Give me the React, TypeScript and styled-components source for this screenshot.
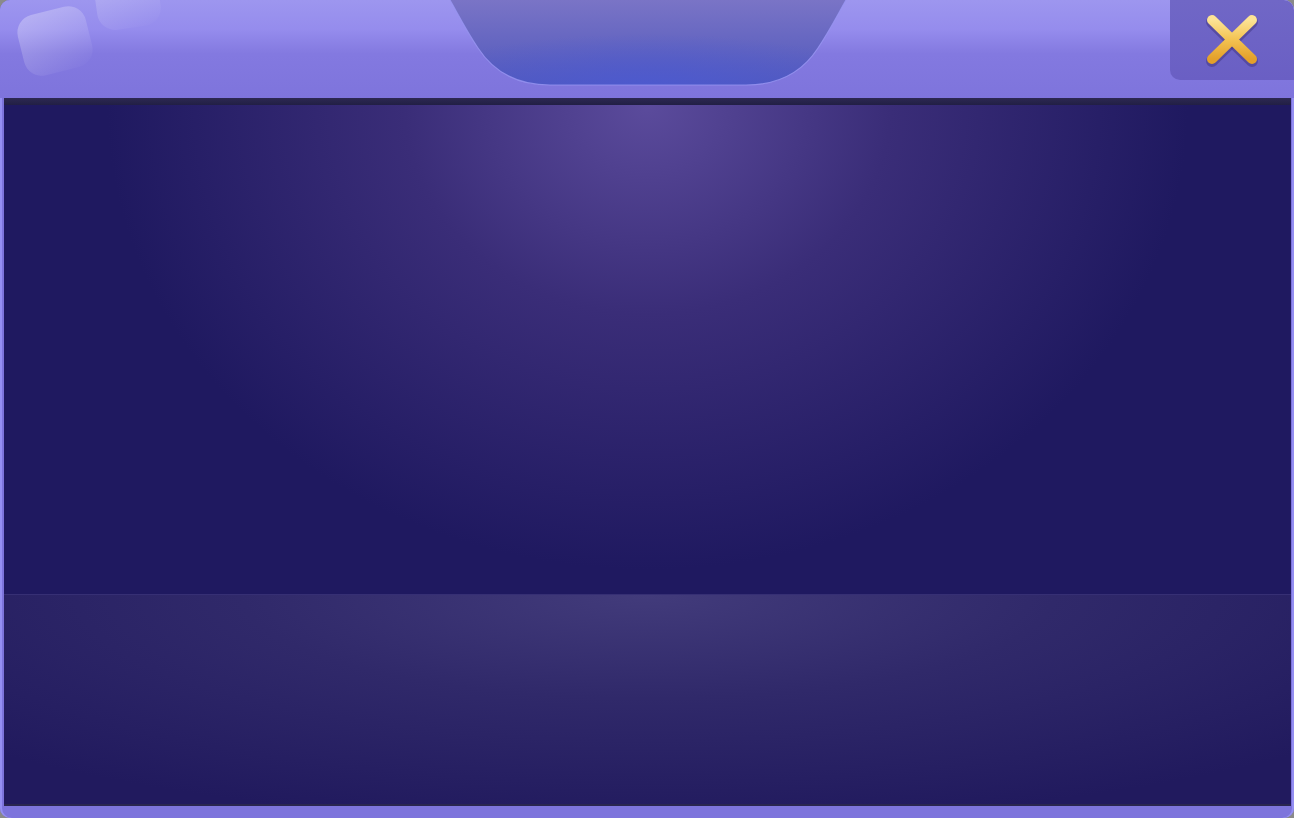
import React from "react";
import styled, { createGlobalStyle } from "styled-components";

const GlobalStyle = createGlobalStyle`
  html, body {
    margin: 0;
    padding: 0;
    background: #8a8a8a;
    font-family: "Noto Sans", sans-serif;
    overflow: hidden;
  }
`;

const Frame = styled.div`
  position: relative;
  width: 1294px;
  height: 818px;
  box-sizing: border-box;
  border-radius: 10px;
  background: #7d74dc;
  padding: 0 3px 12px 4px;
  display: flex;
  flex-direction: column;
  overflow: hidden;
  box-shadow: inset 2px 0 0 #958ff2, inset -2px 0 0 #958ff2;
`;

const Header = styled.div`
  position: relative;
  height: 98px;
  margin: 0 -3px 0 -4px;
  border-radius: 10px 10px 0 0;
  background: linear-gradient(
    180deg,
    #9d96ef 0%,
    #958ced 30%,
    #8379e0 55%,
    #7e74dc 100%
  );
  flex-shrink: 0;
`;

const Gloss = styled.div<{ $l: number; $t: number; $w: number; $h: number; $r: number; $o: number }>`
  position: absolute;
  left: ${(p) => p.$l}px;
  top: ${(p) => p.$t}px;
  width: ${(p) => p.$w}px;
  height: ${(p) => p.$h}px;
  border-radius: 18px;
  transform: rotate(${(p) => p.$r}deg);
  background: linear-gradient(
    160deg,
    rgba(255, 255, 255, ${(p) => p.$o}) 0%,
    rgba(255, 255, 255, 0) 100%
  );
`;

const Notch = styled.svg`
  position: absolute;
  left: 450px;
  top: 0;
`;

const CloseBox = styled.button`
  position: absolute;
  right: 0;
  top: 0;
  width: 124px;
  height: 80px;
  border: none;
  padding: 0;
  border-radius: 0 10px 0 10px;
  background: linear-gradient(180deg, #7067c6 0%, #6a5fc4 100%);
  display: flex;
  align-items: center;
  justify-content: center;
  cursor: pointer;
`;

const Divider = styled.div`
  height: 7px;
  background: linear-gradient(180deg, #2c2852 0%, #221f45 100%);
  flex-shrink: 0;
`;

const Panel = styled.div<{ $h: number; $glow: string; $mid: string; $base: string; $spread: string }>`
  height: ${(p) => p.$h}px;
  flex-shrink: 0;
  background: radial-gradient(
    ellipse ${(p) => p.$spread} at 50% 0%,
    ${(p) => p.$glow} 0%,
    ${(p) => p.$mid} 45%,
    ${(p) => p.$base} 100%
  );
`;

const LowerPanel = styled(Panel)`
  flex: 1;
  border-top: 1px solid #362f74;
  border-bottom: 2px solid #2a2650;
`;

const CloseIcon = () => (
  <svg width="64" height="60" viewBox="0 0 64 60">
    <defs>
      <linearGradient id="xg" x1="0" y1="0" x2="0" y2="1">
        <stop offset="0" stopColor="#fce395" />
        <stop offset="0.5" stopColor="#f3c352" />
        <stop offset="1" stopColor="#e4a02a" />
      </linearGradient>
    </defs>
    <g stroke="#3f3480" strokeOpacity="0.5" strokeWidth="12" strokeLinecap="round" transform="translate(0 2)">
      <line x1="12" y1="10" x2="52" y2="49" />
      <line x1="52" y1="10" x2="12" y2="49" />
    </g>
    <g stroke="url(#xg)" strokeWidth="10" strokeLinecap="round">
      <line x1="12" y1="10" x2="52" y2="49" />
      <line x1="52" y1="10" x2="12" y2="49" />
    </g>
  </svg>
);

const notchPath = "M0,0 C8,14 16,30 28,48 Q52,85 100,85 L296,85 Q344,85 368,48 C380,30 388,14 396,0 Z";

export default function App() {
  return (
    <>
      <GlobalStyle />
      <Frame>
        <Header>
          <Gloss $l={20} $t={10} $w={70} $h={62} $r={-14} $o={0.3} />
          <Gloss $l={96} $t={-22} $w={64} $h={50} $r={-8} $o={0.22} />
          <Notch width="396" height="88" viewBox="0 0 396 88">
            <defs>
              <linearGradient id="ng" x1="0" y1="0" x2="0" y2="1">
                <stop offset="0" stopColor="#7a74c6" />
                <stop offset="1" stopColor="#5058bc" />
              </linearGradient>
              <radialGradient id="nr" cx="0.5" cy="1" r="0.6">
                <stop offset="0" stopColor="#4d5ad0" stopOpacity="0.9" />
                <stop offset="1" stopColor="#4d5ad0" stopOpacity="0" />
              </radialGradient>
            </defs>
            <path d={notchPath} fill="url(#ng)" />
            <path d={notchPath} fill="url(#nr)" />
            <path
              d="M0,0 C8,14 16,30 28,48 Q52,85 100,85 L296,85 Q344,85 368,48 C380,30 388,14 396,0"
              fill="none"
              stroke="#9a96f2"
              strokeOpacity="0.8"
              strokeWidth="1.2"
            />
          </Notch>
          <CloseBox aria-label="Close">
            <CloseIcon />
          </CloseBox>
        </Header>
        <Divider />
        <Panel $h={489} $glow="#5b4b9c" $mid="#3a2d78" $base="#1f1960" $spread="42% 95%" />
        <LowerPanel $h={210} $glow="#423b7b" $mid="#30296a" $base="#211a5e" $spread="70% 110%" />
      </Frame>
    </>
  );
}
